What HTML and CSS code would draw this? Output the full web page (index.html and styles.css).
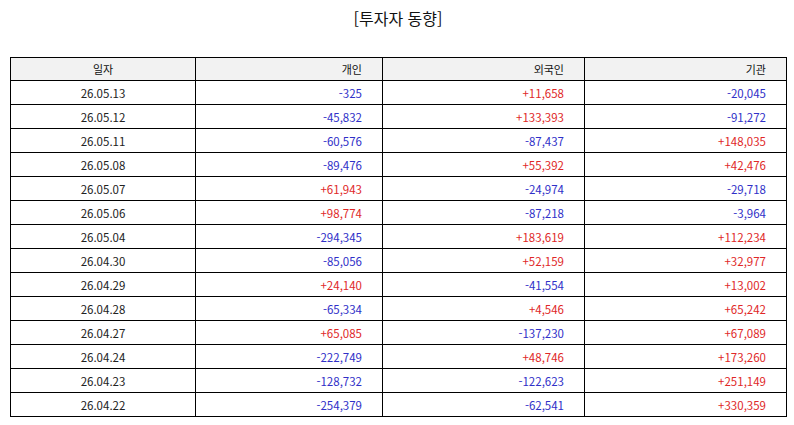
FILE: index.html
```html
<!DOCTYPE html>
<html lang="ko">
<head>
<meta charset="utf-8">
<link rel="stylesheet" href="styles.css">
</head>
<body>
<div class="page">
  <h1 class="title">[투자자 동향]</h1>
  <table class="grid">
    <colgroup>
      <col class="c1"><col class="c2"><col class="c3"><col class="c4">
    </colgroup>
    <thead>
      <tr><th class="date">일자</th><th>개인</th><th>외국인</th><th>기관</th></tr>
    </thead>
    <tbody>
      <tr><td class="date">26.05.13</td><td class="neg">-325</td><td class="pos">+11,658</td><td class="neg">-20,045</td></tr>
      <tr><td class="date">26.05.12</td><td class="neg">-45,832</td><td class="pos">+133,393</td><td class="neg">-91,272</td></tr>
      <tr><td class="date">26.05.11</td><td class="neg">-60,576</td><td class="neg">-87,437</td><td class="pos">+148,035</td></tr>
      <tr><td class="date">26.05.08</td><td class="neg">-89,476</td><td class="pos">+55,392</td><td class="pos">+42,476</td></tr>
      <tr><td class="date">26.05.07</td><td class="pos">+61,943</td><td class="neg">-24,974</td><td class="neg">-29,718</td></tr>
      <tr><td class="date">26.05.06</td><td class="pos">+98,774</td><td class="neg">-87,218</td><td class="neg">-3,964</td></tr>
      <tr><td class="date">26.05.04</td><td class="neg">-294,345</td><td class="pos">+183,619</td><td class="pos">+112,234</td></tr>
      <tr><td class="date">26.04.30</td><td class="neg">-85,056</td><td class="pos">+52,159</td><td class="pos">+32,977</td></tr>
      <tr><td class="date">26.04.29</td><td class="pos">+24,140</td><td class="neg">-41,554</td><td class="pos">+13,002</td></tr>
      <tr><td class="date">26.04.28</td><td class="neg">-65,334</td><td class="pos">+4,546</td><td class="pos">+65,242</td></tr>
      <tr><td class="date">26.04.27</td><td class="pos">+65,085</td><td class="neg">-137,230</td><td class="pos">+67,089</td></tr>
      <tr><td class="date">26.04.24</td><td class="neg">-222,749</td><td class="pos">+48,746</td><td class="pos">+173,260</td></tr>
      <tr><td class="date">26.04.23</td><td class="neg">-128,732</td><td class="neg">-122,623</td><td class="pos">+251,149</td></tr>
      <tr><td class="date">26.04.22</td><td class="neg">-254,379</td><td class="neg">-62,541</td><td class="pos">+330,359</td></tr>
    </tbody>
  </table>
</div>
</body>
</html>
```
FILE: styles.css
```css
html, body {
  margin: 0;
  padding: 0;
  background: #ffffff;
}
.page {
  padding: 0 8px 0 10px;
  font-family: "Noto Sans CJK KR", "Noto Sans", sans-serif;
  color: #222222;
}
.title {
  margin: 0;
  padding-top: 6px;
  height: 57px;
  box-sizing: border-box;
  text-align: center;
  font-size: 16px;
  font-weight: normal;
  line-height: 24px;
  color: #111111;
}
.grid {
  width: 776px;
  border-collapse: collapse;
  table-layout: fixed;
  font-size: 11.5px;
}
.c1 { width: 185px; }
.c2 { width: 187px; }
.c3 { width: 202px; }
.c4 { width: 202px; }
.grid th,
.grid td {
  border: 1px solid #000000;
  height: 24px;
  padding: 0 20px 0 0;
  text-align: right;
  font-weight: normal;
  line-height: 14px;
  box-sizing: border-box;
}
.grid th {
  height: 23px;
  background: #f2f2f2;
  color: #111111;
  font-size: 11px;
}
.grid .date {
  text-align: center;
  padding: 0;
}
.neg { color: #3030c8; }
.pos { color: #e02828; }
```
